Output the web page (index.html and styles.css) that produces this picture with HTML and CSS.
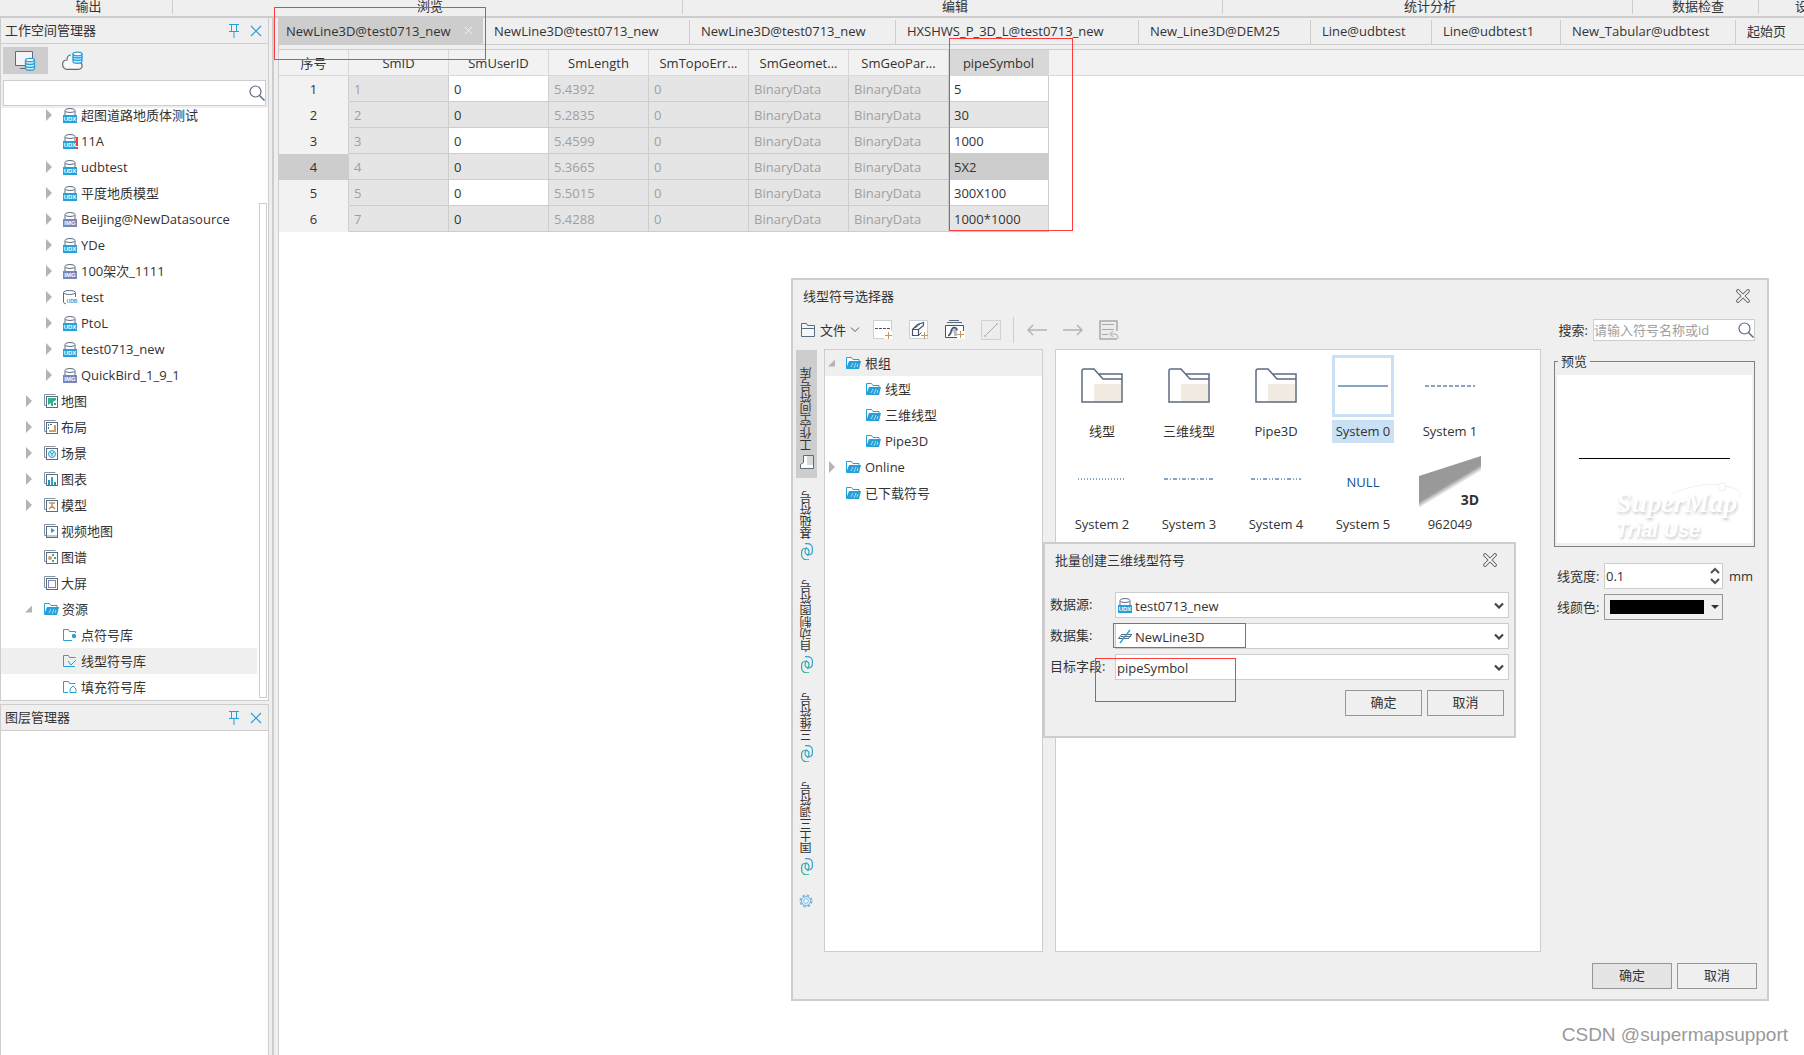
FILE: index.html
```html
<!DOCTYPE html>
<html lang="zh-CN">
<head>
<meta charset="utf-8">
<title>NewLine3D@test0713_new</title>
<link rel="stylesheet" href="styles.css">
</head>
<body>
<svg class="sprite" aria-hidden="true">
  <symbol id="drum" viewBox="0 0 15 7"><path d="M2 7V3M12 7V3" stroke="#5b6b80" fill="none"/><ellipse cx="7" cy="2.500" rx="5" ry="2" fill="#fff" stroke="#5b6b80"/></symbol>
  <symbol id="drumwide" viewBox="0 0 15 15"><path d="M.500 3v9q0 1.500 3 2M12.500 3v4" stroke="#5b6b80" fill="none"/><ellipse cx="6.500" cy="2.500" rx="6" ry="2" fill="#fff" stroke="#5b6b80"/></symbol>
  <symbol id="stack" viewBox="0 0 14 14"><path d="M.500 11.500V.500h11M.500 11.500h2" fill="none" stroke="#8593a3"/><rect x="2.500" y="2.500" width="11" height="11" fill="#fff" stroke="#5b6b80"/></symbol>
  <symbol id="folder" viewBox="0 0 15 12"><path d="M.500 11V.500h5l1.500 2h6V5" fill="#fff" stroke="#26a0da"/><path d="M0 12 3 4h12l-2 8z" fill="#26a0da"/><path d="M5 10l2-4M8 11l2-5M11 10l1-3" stroke="#a8daf2"/></symbol>
  <symbol id="pin" viewBox="0 0 12 16"><path d="M1 1.500h10M3.500 2v6M8.500 2v6M1 8.500h10M6 9v6" fill="none" stroke="#26a0da"/></symbol>
  <symbol id="close" viewBox="0 0 12 12"><path d="M1 1l10 10M11 1 1 11" fill="none" stroke="currentColor" stroke-width="1.200"/></symbol>
  <symbol id="closebox" viewBox="0 0 14 14"><path d="M2 2l10 10M12 2 2 12" stroke="#555" stroke-width="3.600" stroke-linecap="round"/><path d="M2 2l10 10M12 2 2 12" stroke="#f7f7f7" stroke-width="1.800" stroke-linecap="round"/></symbol>
  <symbol id="lens" viewBox="0 0 16 16"><circle cx="6.500" cy="6.500" r="5.500" fill="none" stroke="#5b6b80" stroke-width="1.200"/><path d="M10.500 10.500l5 5" stroke="#5b6b80" stroke-width="1.500"/></symbol>
  <symbol id="down" viewBox="0 0 10 7"><path d="M1 1.500l4 4 4-4" fill="none" stroke="#444" stroke-width="2.200"/></symbol>
  <symbol id="link" viewBox="0 0 12 17"><path d="M8 16.500C3 17.500.600 15 .600 12V9.500C.600 4 8 4 8 8.500c0 2 0 3-1.500 4.500" fill="none" stroke="#2fae90" stroke-width="1.200"/><path d="M4 .700C9 0 11.400 2 11.400 5v3c0 5-7.400 5-7.400.500C4 6.500 4.500 5.500 6 4.500" fill="none" stroke="#3ba0dd" stroke-width="1.200"/></symbol>
  <symbol id="bigfolder" viewBox="0 0 42 36"><path d="M13 16h27v18H13z" fill="#f2ebe1"/><path d="M1 33V3q0-2 2-2h10l9 10h19M18 6h23v28H1v-2" fill="none" stroke="#5b6b80" stroke-width="1.500"/></symbol>
</svg>

<header class="ribbon">
  <span>输出</span><span>浏览</span><span>编辑</span><span>统计分析</span><span>数据检查</span><span class="cut">设</span>
</header>

<div class="workspace">
  <aside class="sidebar">
    <section class="panel panel-ws">
      <div class="panel-head"><h2>工作空间管理器</h2><svg class="i-pin"><use href="#pin"/></svg><svg class="i-close"><use href="#close"/></svg></div>
      <div class="panel-tools">
        <button class="tool on" aria-label="本地工作空间"><svg width="21" height="20" viewBox="0 0 21 20"><path d="M10 14.500H.500V.500h17V7M5 17.500h5" fill="#f4f4f4" stroke="#5b6b80"/><path d="M10.500 9v8c0 3 9 3 9 0V9" fill="#e6f4fb" stroke="#26a0da" stroke-width="1.300"/><ellipse cx="15" cy="9" rx="4.500" ry="1.700" fill="#fff" stroke="#26a0da" stroke-width="1.300"/><path d="M10.500 12c1 2 8 2 9 0M10.500 15c1 2 8 2 9 0" fill="none" stroke="#26a0da" stroke-width="1.300"/></svg></button>
        <button class="tool" aria-label="在线工作空间"><svg width="21" height="20" viewBox="0 0 21 20"><path d="M9 4C6 4 5 6 5 9 2 9 .600 11 .600 13.500S2.500 18.400 5 18.400h11c6 0 5-8 0-7" fill="#f8f8f8" stroke="#5b6b80" stroke-width="1.200"/><path d="M11 3v7c0 3 9 3 9 0V3" fill="#e6f4fb" stroke="#26a0da" stroke-width="1.300"/><ellipse cx="15.500" cy="3" rx="4.500" ry="1.800" fill="#fff" stroke="#26a0da" stroke-width="1.300"/><path d="M11 5.500c1 2 8 2 9 0M11 8c1 2 8 2 9 0" fill="none" stroke="#26a0da" stroke-width="1.300"/></svg></button>
      </div>
      <div class="search"><input type="text" aria-label="搜索"><svg class="i-lens"><use href="#lens"/></svg></div>
      <div class="tree-area">
        <ul class="tree">
          <li class="l2"><i class="arr"></i><span class="db"><svg><use href="#drum"/></svg><b>UDX</b></span>超图道路地质体测试</li>
          <li class="l2"><i class="arr none"></i><span class="db warn"><svg><use href="#drum"/></svg><b>UDX</b></span>11A</li>
          <li class="l2"><i class="arr"></i><span class="db"><svg><use href="#drum"/></svg><b>UDX</b></span>udbtest</li>
          <li class="l2"><i class="arr"></i><span class="db"><svg><use href="#drum"/></svg><b>UDX</b></span>平度地质模型</li>
          <li class="l2"><i class="arr"></i><span class="db image"><svg><use href="#drum"/></svg><b>IMG</b></span>Beijing@NewDatasource</li>
          <li class="l2"><i class="arr"></i><span class="db"><svg><use href="#drum"/></svg><b>UDX</b></span>YDe</li>
          <li class="l2"><i class="arr"></i><span class="db image"><svg><use href="#drum"/></svg><b>IMG</b></span>100架次_1111</li>
          <li class="l2"><i class="arr"></i><span class="db udb"><svg><use href="#drumwide"/></svg><b>UDB</b></span>test</li>
          <li class="l2"><i class="arr"></i><span class="db"><svg><use href="#drum"/></svg><b>UDX</b></span>PtoL</li>
          <li class="l2"><i class="arr"></i><span class="db"><svg><use href="#drum"/></svg><b>UDX</b></span>test0713_new</li>
          <li class="l2"><i class="arr"></i><span class="db image"><svg><use href="#drum"/></svg><b>IMG</b></span>QuickBird_1_9_1</li>
          <li class="l1"><i class="arr"></i><svg class="i-st" viewBox="0 0 14 14"><use href="#stack"/><path d="M4 4h8v2L9 8v4H7V9L4 11z" fill="#2fae90"/><path d="M10 9h2v2h-2z" fill="#2fae90"/></svg>地图</li>
          <li class="l1"><i class="arr"></i><svg class="i-st" viewBox="0 0 14 14"><use href="#stack"/><path d="M11 5v6H5" stroke="#c9a071" stroke-width="2" fill="none"/><path d="M4.500 9V4.500H9" stroke="#5b6b80" stroke-dasharray="2 1" fill="none"/></svg>布局</li>
          <li class="l1"><i class="arr"></i><svg class="i-st" viewBox="0 0 14 14"><use href="#stack"/><circle cx="8" cy="8" r="3.500" fill="#d3ecf8" stroke="#26a0da"/><path d="M6 6l2 2 2-2M8 8v2" stroke="#26a0da" fill="none"/></svg>场景</li>
          <li class="l1"><i class="arr"></i><svg class="i-st" viewBox="0 0 14 14"><use href="#stack"/><path d="M5 13V8M11 13v-3" stroke="#2d8fd0" stroke-width="2"/><path d="M8 13V5" stroke="#2fae90" stroke-width="2"/></svg>图表</li>
          <li class="l1"><i class="arr"></i><svg class="i-st" viewBox="0 0 14 14"><use href="#stack"/><path d="M5 5h6M8 5v3M5 11l3-3 3 3" stroke="#bd946a" stroke-width="1.500" fill="none"/></svg>模型</li>
          <li class="l1"><i class="arr none"></i><svg class="i-st" viewBox="0 0 14 14"><use href="#stack"/><path d="M7 4l4 2.500L7 9z" fill="#26a0da"/><path d="M3 12h10" stroke="#c4c9d0" stroke-width="2"/></svg>视频地图</li>
          <li class="l1"><i class="arr none"></i><svg class="i-st" viewBox="0 0 14 14"><use href="#stack"/><circle cx="6" cy="8" r="2" fill="#c9a071"/><path d="M8 4h2v2H8zM10 7h2v2h-2zM8 10h2v2H8z" fill="#2fae90"/></svg>图谱</li>
          <li class="l1"><i class="arr none"></i><svg class="i-st" viewBox="0 0 14 14"><use href="#stack"/><rect x="4.500" y="4.500" width="7" height="7" fill="#fff" stroke="#7b84bd"/></svg>大屏</li>
          <li class="l1"><i class="arr open"></i><svg class="i-fo"><use href="#folder"/></svg>资源</li>
          <li class="l2"><i class="arr none"></i><svg class="i-fo" viewBox="0 0 15 12"><path d="M9 11.500H.500V.500h5l1 2h6V4" fill="none" stroke="#26a0da"/><circle cx="11" cy="7" r="2.200" fill="#26a0da"/></svg>点符号库</li>
          <li class="l2 sel"><i class="arr none"></i><svg class="i-fo" viewBox="0 0 15 12"><path d="M12 11.500H.500V.500h5l1 2h6M5 6l3 4 5-5" fill="none" stroke="#26a0da"/></svg>线型符号库</li>
          <li class="l2"><i class="arr none"></i><svg class="i-fo" viewBox="0 0 15 12"><path d="M5 11.500H.500V.500h5l1 2h6M7 11.500V8l3-3 3 3v3.500z" fill="none" stroke="#26a0da"/></svg>填充符号库</li>
        </ul>
        <div class="scroll"><div class="thumb"></div></div>
      </div>
    </section>
    <section class="panel panel-layers">
      <div class="panel-head"><h2>图层管理器</h2><svg class="i-pin"><use href="#pin"/></svg><svg class="i-close"><use href="#close"/></svg></div>
      <div class="panel-body"></div>
    </section>
  </aside>
  <div class="splitter"></div>

  <main class="main">
    <nav class="tabs" role="tablist">
      <button role="tab" aria-selected="true" class="on">NewLine3D@test0713_new<svg class="i-tabx"><use href="#close"/></svg></button>
      <button role="tab">NewLine3D@test0713_new</button>
      <button role="tab">NewLine3D@test0713_new</button>
      <button role="tab">HXSHWS_P_3D_L@test0713_new</button>
      <button role="tab">New_Line3D@DEM25</button>
      <button role="tab">Line@udbtest</button>
      <button role="tab">Line@udbtest1</button>
      <button role="tab">New_Tabular@udbtest</button>
      <button role="tab">起始页</button>
    </nav>
    <table class="grid">
      <colgroup><col class="c-n"><col class="c-d"><col class="c-d"><col class="c-d"><col class="c-d"><col class="c-d"><col class="c-d"><col class="c-d"><col></colgroup>
      <thead><tr><th>序号</th><th>SmID</th><th>SmUserID</th><th>SmLength</th><th>SmTopoErr...</th><th>SmGeomet...</th><th>SmGeoPar...</th><th class="on">pipeSymbol</th><td></td></tr></thead>
      <tbody>
        <tr><th>1</th><td>1</td><td class="ed">0</td><td>5.4392</td><td>0</td><td>BinaryData</td><td>BinaryData</td><td class="ed">5</td></tr>
        <tr><th>2</th><td>2</td><td class="ed">0</td><td>5.2835</td><td>0</td><td>BinaryData</td><td>BinaryData</td><td class="ed">30</td></tr>
        <tr><th>3</th><td>3</td><td class="ed">0</td><td>5.4599</td><td>0</td><td>BinaryData</td><td>BinaryData</td><td class="ed">1000</td></tr>
        <tr><th class="on">4</th><td>4</td><td class="ed">0</td><td>5.3665</td><td>0</td><td>BinaryData</td><td>BinaryData</td><td class="ed cur">5X2</td></tr>
        <tr><th>5</th><td>5</td><td class="ed">0</td><td>5.5015</td><td>0</td><td>BinaryData</td><td>BinaryData</td><td class="ed">300X100</td></tr>
        <tr><th>6</th><td>7</td><td class="ed">0</td><td>5.4288</td><td>0</td><td>BinaryData</td><td>BinaryData</td><td class="ed">1000*1000</td></tr>
      </tbody>
    </table>
  </main>
</div>

<section class="dialog picker" role="dialog" aria-label="线型符号选择器">
  <div class="dlg-title"><h2>线型符号选择器</h2><button class="x" aria-label="关闭"><svg class="i-x"><use href="#closebox"/></svg></button></div>
  <div class="toolbar">
    <button class="file"><svg width="15" height="14" viewBox="0 0 15 14"><path d="M.500 13.500V.500h5l1 2h7v11zM.500 5.500h13" fill="#f4f6f8" stroke="#5b6b80"/></svg>文件<svg width="10" height="6" viewBox="0 0 10 6"><path d="M1 .500l4 4 4-4" fill="none" stroke="#555"/></svg></button>
    <button class="tb" aria-label="新建二维线型"><svg viewBox="0 0 20 20"><path d="M.500.500h18v18H.500z" fill="#fff" stroke="#c8cfd6"/><path d="M2 8.500h15" stroke="#44546a" stroke-dasharray="3 1"/><path d="M11 11h8v8h-8z" fill="#fff"/><path d="M15.500 12v7M12 15.500h7" stroke="#c8965a"/></svg></button>
    <button class="tb" aria-label="新建三维线型"><svg viewBox="0 0 20 20"><path d="M.500.500h18v18H.500z" fill="#fff" stroke="#c8cfd6"/><path d="M3.500 9.500h6v6h-6zM3.500 9.500l5-5 6-2v3l-5 4" fill="none" stroke="#44546a" stroke-width="1.200"/><path d="M6 8l5-4M9.500 15.500l3-3" stroke="#44546a"/><path d="M15.500 12v7M12 15.500h7" stroke="#c8965a"/></svg></button>
    <button class="tb" aria-label="批量创建"><svg viewBox="0 0 20 20"><path d="M4 .500h10M2 2.500h15" stroke="#5b6b80"/><path d="M.500 5.500h18v12H.500z" fill="#fff" stroke="#44546a"/><path d="M3 16c3 0 3-9 6-9 2 0 3 3 3 9H9c0-3 0-4-1-5-1 2-2 5-5 5z" fill="#b9bec6"/><path d="M3 15.500c4 0 2-8 6-8 2 0 3 1 3 3" fill="none" stroke="#44546a" stroke-width="1.500"/><path d="M12 11h8v8h-8z" fill="#fff"/><path d="M15.500 11v7M12 14.500h7" stroke="#c8965a"/></svg></button>
    <button class="tb" aria-label="编辑" disabled><svg viewBox="0 0 20 20"><path d="M.500.500h19v19H.500z" fill="#ededed" stroke="#d0d0d0"/><path d="M4 16 16 4" stroke="#a9a9a9"/><circle cx="4" cy="16" r="1" fill="#bbb"/><circle cx="16" cy="4" r="1" fill="#bbb"/></svg></button>
    <i class="sep"></i>
    <button class="tb" aria-label="后退" disabled><svg viewBox="0 0 20 20"><path d="M1 10h19M6 5l-5 5 5 5" fill="none" stroke="#b4b4b4" stroke-width="1.500"/></svg></button>
    <button class="tb" aria-label="前进" disabled><svg viewBox="0 0 20 20"><path d="M0 10h19M14 5l5 5-5 5" fill="none" stroke="#b4b4b4" stroke-width="1.500"/></svg></button>
    <button class="tb" aria-label="属性" disabled><svg viewBox="0 0 20 20"><path d="M18 11V1H1v18h17" fill="#ececec" stroke="#a9a9a9" stroke-width="1.500"/><path d="M3 4.500h12M3 9.500h12M3 14.500h6" stroke="#a9a9a9"/><path d="M14 11l-3 3 3 3M11 14h5q3 0 3 5" fill="none" stroke="#c5c5c5" stroke-width="1.500"/></svg></button>
    <label class="find" for="q">搜索:</label>
    <div class="search small"><input id="q" type="text" placeholder="请输入符号名称或id"><svg class="i-lens"><use href="#lens"/></svg></div>
  </div>
  <div class="pick-body">
    <div class="vtabs" role="tablist">
      <button role="tab" aria-selected="true" class="on"><svg width="14" height="14" viewBox="0 0 14 14"><path d="M3.500.500h10v13H.500v-4l3-2z" fill="#fff" stroke="#5b6b80"/><path d="M7 1h6v9H7z" fill="#d5dade"/></svg>工作空间符号库</button>
      <button role="tab"><svg class="i-link"><use href="#link"/></svg>基础符号</button>
      <button role="tab"><svg class="i-link"><use href="#link"/></svg>自动制图符号</button>
      <button role="tab"><svg class="i-link"><use href="#link"/></svg>三维符号</button>
      <button role="tab"><svg class="i-link"><use href="#link"/></svg>国土三调符号</button>
      <button class="gear" aria-label="设置"><svg width="14" height="14" viewBox="0 0 14 14"><circle cx="7" cy="7" r="5.500" fill="none" stroke="#7db5dc" stroke-width="2" stroke-dasharray="2.500 1.820"/><circle cx="7" cy="7" r="4.500" fill="#e4f0f8" stroke="#7db5dc"/><circle cx="7" cy="7" r="2.300" fill="#fff" stroke="#7db5dc"/></svg></button>
    </div>
    <ul class="tree groups">
      <li class="g0 sel"><i class="arr open"></i><svg class="i-fo"><use href="#folder"/></svg>根组</li>
      <li class="g1"><i class="arr none"></i><svg class="i-fo"><use href="#folder"/></svg>线型</li>
      <li class="g1"><i class="arr none"></i><svg class="i-fo"><use href="#folder"/></svg>三维线型</li>
      <li class="g1"><i class="arr none"></i><svg class="i-fo"><use href="#folder"/></svg>Pipe3D</li>
      <li class="g0"><i class="arr"></i><svg class="i-fo"><use href="#folder"/></svg>Online</li>
      <li class="g0"><i class="arr none"></i><svg class="i-fo"><use href="#folder"/></svg>已下载符号</li>
    </ul>
    <ul class="symbols">
      <li><span class="pic"><svg class="i-big"><use href="#bigfolder"/></svg></span><span class="cap">线型</span></li>
      <li><span class="pic"><svg class="i-big"><use href="#bigfolder"/></svg></span><span class="cap">三维线型</span></li>
      <li><span class="pic"><svg class="i-big"><use href="#bigfolder"/></svg></span><span class="cap">Pipe3D</span></li>
      <li class="sel"><span class="pic"><svg class="ln"><path d="M0 1h50"/></svg></span><span class="cap">System 0</span></li>
      <li><span class="pic"><svg class="ln"><path d="M0 1h50" stroke-dasharray="4 2"/></svg></span><span class="cap">System 1</span></li>
      <li><span class="pic"><svg class="ln"><path d="M1 1h48" stroke-dasharray="1 2"/></svg></span><span class="cap">System 2</span></li>
      <li><span class="pic"><svg class="ln"><path d="M0 1h50" stroke-dasharray="4 2 1 2"/></svg></span><span class="cap">System 3</span></li>
      <li><span class="pic"><svg class="ln"><path d="M0 1h50" stroke-dasharray="4 2 1 2 1 2"/></svg></span><span class="cap">System 4</span></li>
      <li><span class="pic null">NULL</span><span class="cap">System 5</span></li>
      <li><span class="pic solid"><svg width="62" height="62" viewBox="0 0 62 62"><defs><linearGradient id="pipe" gradientUnits="userSpaceOnUse" x1="28" y1="37" x2="31" y2="42"><stop offset="0" stop-color="#999"/><stop offset="1" stop-color="#999" stop-opacity="0"/></linearGradient></defs><path d="M0 28 62 8v22L0 62z" fill="url(#pipe)"/></svg><b>3D</b></span><span class="cap">962049</span></li>
    </ul>
    <div class="side">
      <fieldset class="preview"><legend>预览</legend>
        <div class="canvas"><div class="stroke"></div><div class="mark"><svg width="80" height="18" viewBox="0 0 80 18"><path d="M4 12Q40-4 66 6q12 5 6 10" fill="none" stroke="#f0f0f0"/><circle cx="55" cy="5" r="4" fill="#fff" stroke="#eee"/></svg><span class="brand">SuperMap</span><span class="trial">Trial Use</span></div></div>
      </fieldset>
      <div class="props">
        <label for="w">线宽度:</label>
        <div class="spin"><input id="w" type="text" value="0.1"><svg width="10" height="18" viewBox="0 0 10 18"><path d="M1 6l4-4 4 4M1 12l4 4 4-4" fill="none" stroke="#555" stroke-width="2.200"/></svg></div>
        <span>mm</span>
        <label for="c">线颜色:</label>
        <button id="c" class="color" aria-label="线颜色"><span class="swatch"></span><i class="tri"></i></button>
      </div>
    </div>
  </div>
  <div class="actions"><button class="btn default">确定</button><button class="btn">取消</button></div>
</section>

<section class="dialog batch" role="dialog" aria-label="批量创建三维线型符号">
  <div class="dlg-title"><h2>批量创建三维线型符号</h2><button class="x" aria-label="关闭"><svg class="i-x"><use href="#closebox"/></svg></button></div>
  <div class="form">
    <label for="ds">数据源:</label>
    <div class="combo with-icon"><select id="ds"><option>test0713_new</option></select><span class="lead db"><svg><use href="#drum"/></svg><b>UDX</b></span><svg class="i-down"><use href="#down"/></svg></div>
    <label for="dt">数据集:</label>
    <div class="combo with-icon"><select id="dt"><option>NewLine3D</option></select><svg class="lead i-line" viewBox="0 0 15 15"><path d="M4 5.500h10M1 9.500h10M3 7.500h10M0 10l4-5M10 10l4-5" stroke="#5b6b80"/><path d="M2 14 12 1" stroke="#26a0da" stroke-width="1.300"/></svg><svg class="i-down"><use href="#down"/></svg></div>
    <label for="fd">目标字段:</label>
    <div class="combo"><select id="fd"><option>pipeSymbol</option></select><svg class="i-down"><use href="#down"/></svg></div>
  </div>
  <div class="actions"><button class="btn">确定</button><button class="btn">取消</button></div>
</section>

<div class="note note-tab"></div>
<div class="note note-column"></div>
<div class="note note-dataset"></div>
<div class="note note-field"></div>
<div class="credit">CSDN @supermapsupport</div>
</body>
</html>
```
FILE: styles.css
```css
* { box-sizing: border-box; }
:root { --line: #cdcdcd; --bg: #efefef; --text: #333; --blue: #26a0da; }
body {
  margin: 0;
  min-height: 100vh;
  display: flex;
  flex-direction: column;
  position: relative;
  overflow: hidden;
  background: var(--bg);
  color: var(--text);
  font: 13px/26px "Open Sans", "Noto Sans CJK SC", sans-serif;
}
button, input, select { font: inherit; color: inherit; margin: 0; padding: 0; border: 0; border-radius: 0; background: none; outline: 0; }
h2 { margin: 0; font-size: 13px; font-weight: 400; line-height: 24px; }
ul { margin: 0; padding: 0; list-style: none; }
svg { display: block; flex: none; }
.sprite { position: absolute; width: 0; height: 0; }

.i-pin { width: 12px; height: 16px; }
.i-close { width: 12px; height: 12px; color: var(--blue); }
.i-tabx { width: 9px; height: 9px; color: #f4f4f4; }
.i-x { width: 14px; height: 14px; }
.i-lens { width: 16px; height: 16px; }
.i-line { width: 15px; height: 15px; }
.i-st { width: 14px; height: 14px; }
.i-fo { width: 15px; height: 12px; }
.i-down { width: 10px; height: 7px; }
.i-link { width: 12px; height: 17px; }
.i-big { width: 42px; height: 36px; }

/* datasource badge: a drum with its engine tag */
.db { position: relative; display: flex; flex-direction: column; width: 15px; height: 15px; flex: none; }
.db svg { width: 15px; height: 7px; margin: 0; }
.db b { width: 14px; height: 8px; background: var(--blue); color: #fff; font: bold 6px/8px "Liberation Sans", sans-serif; text-align: center; }
.db.image b { background: #7b84bd; }
.db.udb { display: grid; align-items: end; justify-items: end; }
.db.udb > * { grid-area: 1 / 1; }
.db.udb svg { height: 15px; }
.db.udb b { width: 12px; background: #fff; color: var(--blue); font-size: 5px; }
.db.warn::after { content: ""; position: absolute; right: 0; top: 3px; width: 2px; height: 12px; background: linear-gradient(#e8432e 9px, #fff 9px 10px, #e8432e 10px); }

/* ribbon group captions */
.ribbon {
  display: grid;
  grid-template-columns: 173px 510px 540px 410px 126px 1fr;
  height: 18px;
  overflow: hidden;
  border-bottom: 2px solid var(--line);
}
.ribbon span { height: 14px; padding-left: 5px; line-height: 12px; text-align: center; border-right: 1px solid var(--line); }
.ribbon .cut { padding-left: 36px; text-align: left; white-space: nowrap; border: 0; }

.workspace { flex: 1; display: flex; }
.sidebar { width: 269px; display: flex; flex-direction: column; gap: 3px; }
.panel { display: flex; flex-direction: column; border: 1px solid var(--line); border-top: 0; }
.panel-layers { flex: 1; border-top: 1px solid var(--line); border-bottom: 0; }
.panel-head { display: flex; align-items: center; height: 26px; padding: 0 6px 0 4px; gap: 10px; border-bottom: 1px solid var(--line); }
.panel-head h2 { flex: 1; padding-bottom: 2px; }
.panel-body { flex: 1; background: #fff; }
.panel-tools { display: flex; gap: 2px; padding: 3px 2px 6px; }
.tool { width: 45px; height: 27px; display: grid; place-items: center; }
.tool.on { background: var(--line); }
.search { display: flex; align-items: center; height: 26px; margin: 0 2px 2px; background: #fff; border: 1px solid var(--line); }
.search input { flex: 1; min-width: 0; height: 100%; }

.tree-area { display: flex; gap: 2px; height: 592px; background: #fff; }
.tree li { display: flex; align-items: center; height: 26px; white-space: nowrap; }
.tree-area .tree { flex: 1; margin-top: -6px; clip-path: inset(6px 0 0); }
.tree li.sel { background: var(--bg); }
.tree li > svg, .tree .db { margin-right: 3px; }
.l1 { padding-left: 25px; }
.l2 { padding-left: 45px; }
.l1 .arr { margin-right: 12px; }
.l2 .arr { margin-right: 11px; }
.arr { width: 6px; height: 12px; background: #b4b4b4; clip-path: polygon(0 0, 100% 50%, 0 100%); }
.arr.none { background: none; }
.arr.open { width: 7px; height: 7px; margin-left: -1px; clip-path: polygon(100% 0, 100% 100%, 0 100%); }
.scroll { width: 9px; padding: 95px 1px 2px 0; display: flex; }
.thumb { flex: 1; border: 1px solid var(--line); }

.splitter { width: 9px; padding: 0 4px 0 3px; }
.splitter::before { content: ""; display: block; width: 2px; height: 100%; background: var(--line); }

.main { flex: 1; min-width: 0; background: #fff; border-left: 1px solid var(--line); }
.tabs {
  display: grid;
  grid-template-columns: 204px 207px 206px 243px 172px 121px 129px 175px 1fr;
  height: 32px;
  padding-bottom: 4px;
  background: linear-gradient(var(--line), var(--line)) 0 26px / 100% 1px no-repeat var(--bg);
  border-bottom: 1px solid var(--line);
}
.tabs button { display: flex; align-items: center; height: 24px; margin-top: 2px; padding: 0 0 3px 11px; white-space: nowrap; border-right: 1px solid var(--line); }
.tabs button.on { height: 26px; margin-top: 0; padding: 0 0 1px 7px; gap: 13px; background: var(--line); }
.tabs button:last-child { border: 0; }

.grid { width: 100%; table-layout: fixed; border-collapse: separate; border-spacing: 0; }
.c-n { width: 70px; }
.c-d { width: 100px; }
.grid th, .grid td { height: 26px; padding: 2px 0 0 5px; line-height: 23px; border: 0 solid var(--line); border-width: 0 1px 1px 0; white-space: nowrap; overflow: hidden; }
.grid th { padding-left: 0; font-weight: 400; background: #f2f2f2; }
.grid thead td { background: #f2f2f2; border-right: 0; }
.grid thead th, .grid thead td { border-color: #d8d8d8; }
.grid thead th.on { background: #d8d8d8; }
.grid tbody th { border-bottom-color: #f2f2f2; }
.grid tbody th.on { background: var(--line); border-color: var(--line); }
.grid tbody td { background: #e5e5e5; color: #a0a0a0; }
.grid tbody .ed { color: var(--text); }
.grid tbody tr:nth-child(odd) .ed { background: #fff; }
.grid tbody .ed.cur { background: var(--line); }

/* floating windows */
.dialog { position: absolute; display: flex; flex-direction: column; background: var(--bg); border: 2px solid var(--line); }
.picker { left: 791px; top: 278px; width: 978px; }
.batch { left: 1043px; top: 542px; width: 473px; }
.dlg-title { display: flex; align-items: center; justify-content: space-between; height: 31px; padding: 0 17px 0 10px; }
.x { display: flex; }
.toolbar { display: flex; align-items: center; height: 38px; padding: 0 12px 0 8px; gap: 16px; }
.file { display: flex; align-items: center; gap: 4px; margin-right: -3px; }
.tb, .tb svg { width: 20px; height: 20px; }
.sep { width: 1px; height: 26px; margin: 0 -3px 0 -4px; background: var(--line); }
.find { margin-left: auto; }
.search.small { width: 162px; height: 22px; margin: 0 0 0 -11px; line-height: 20px; }
.search ::placeholder { color: #a0a0a0; opacity: 1; }

.pick-body { display: flex; height: 603px; }
.vtabs { display: flex; flex-direction: column; width: 31px; padding: 1px 7px 0 3px; }
.vtabs button { display: flex; align-items: center; gap: 4px; width: 21px; padding: 7px 1px 13px 0; writing-mode: vertical-rl; transform: rotate(180deg); font-size: 12px; line-height: 20px; }
.vtabs button.on { height: 128px; padding-top: 9px; background: var(--line); }
.vtabs svg { transform: rotate(180deg); }
.vtabs .gear { display: grid; place-items: center; height: 38px; padding: 0; }
.groups { width: 219px; background: #fff; border: 1px solid var(--line); }
.groups .arr { margin-right: 11px; }
.groups li > svg { margin-right: 4px; }
.g0 { padding-left: 4px; }
.g1 { padding-left: 24px; }
.symbols {
  flex: 1;
  display: grid;
  grid-template-columns: repeat(auto-fill, 62px);
  grid-auto-rows: 88px;
  align-content: start;
  gap: 5px 25px;
  margin-left: 12px;
  padding: 5px 15px;
  background: #fff;
  border: 1px solid var(--line);
}
.symbols li { display: flex; flex-direction: column; gap: 3px; }
.pic { display: grid; place-items: center; height: 62px; }
.cap { height: 23px; line-height: 23px; text-align: center; white-space: nowrap; }
.sel .pic { border: 3px solid #c9e0f5; }
.sel .cap { background: #c9e0f5; }
.ln { width: 50px; height: 2px; stroke: #86a6c6; stroke-width: 2; }
.null { padding-top: 5px; color: #0f4f8f; }
.pic.solid > * { grid-area: 1 / 1; }
.pic.solid b { place-self: end; padding-right: 2px; line-height: 20px; font-size: 14px; }

.side { width: 226px; padding: 0 12px 0 13px; }
.preview { margin: 0; height: 198px; padding: 2px; border: 1px solid #808080; min-width: 0; }
.preview legend { margin-left: 1px; padding: 0 3px; line-height: 24px; }
.canvas { height: 168px; display: flex; flex-direction: column; align-items: center; gap: 23px; padding-top: 83px; background: #fff; }
.stroke { width: 151px; height: 1px; background: #000; }
.mark { display: grid; align-self: flex-end; width: 136px; color: #fff; text-shadow: 1px 2px 3px #ccc; }
.mark svg, .brand { grid-area: 1 / 1; }
.mark svg { margin-left: 51px; }
.brand { padding-top: 5px; font: italic bold 28px/32px "Liberation Serif", serif; }
.trial { font: italic bold 20px/22px "Liberation Sans", sans-serif; }
.props { display: grid; grid-template-columns: 47px 119px 1fr; gap: 5px 0; padding: 16px 0 0 3px; }
.props > span { padding-left: 6px; }
.spin { display: flex; align-items: center; height: 26px; padding: 0 2px 0 1px; background: #fff; border: 1px solid var(--line); }
.spin input { flex: 1; min-width: 0; }
.color { display: flex; align-items: center; height: 26px; gap: 7px; padding: 0 3px 0 5px; border: 1px solid #969696; }
.swatch { flex: 1; height: 14px; background: #000; }
.tri { width: 8px; height: 4px; background: #333; clip-path: polygon(0 0, 100% 0, 50% 100%); }

.actions { display: flex; justify-content: flex-end; gap: 5px; padding: 11px 10px 10px; }
.btn { width: 80px; height: 26px; padding-bottom: 2px; line-height: 22px; border: 1px solid #969696; }
.btn.default { background: #e5e5e5; }
.batch .btn { width: 77px; }
.batch .actions { padding: 10px 10px 20px; }

.form { display: grid; grid-template-columns: 65px 1fr; gap: 5px 0; padding: 17px 5px 0; }
.form label { line-height: 24px; }
.combo { display: grid; align-items: center; height: 26px; background: #fff; border: 1px solid var(--line); }
.combo > * { grid-area: 1 / 1; }
.combo select { appearance: none; width: 100%; height: 24px; padding: 0 0 2px 1px; }
.combo.with-icon select { padding-left: 19px; }
.combo > svg, .lead { pointer-events: none; }
.combo .lead { margin-left: 2px; }
.combo .i-down { justify-self: end; margin-right: 4px; }

/* red annotation frames over the windows */
.note { position: absolute; border: 1px solid #ff3b3b; }
.note-tab { left: 274px; top: 7px; width: 212px; height: 53px; }
.note-column { left: 949px; top: 38px; width: 124px; height: 193px; }
.note-dataset { left: 1113px; top: 623px; width: 133px; height: 25px; }
.note-field { left: 1095px; top: 658px; width: 141px; height: 44px; }
.credit { position: absolute; right: 16px; bottom: 7px; color: #999; font: 19px/26px "Liberation Sans", sans-serif; }
```
